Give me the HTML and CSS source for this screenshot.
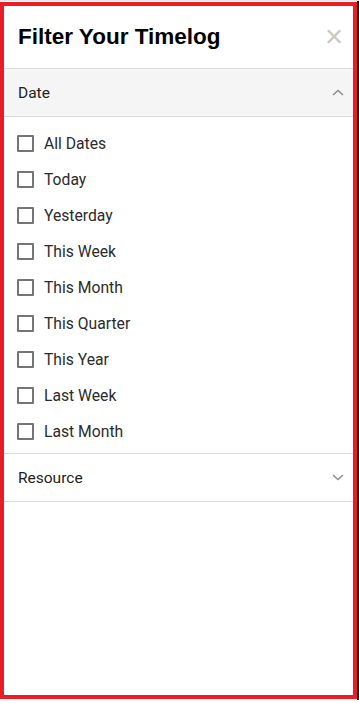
FILE: index.html
```html
<!DOCTYPE html>
<html lang="en">
<head>
  <meta charset="UTF-8" />
  <meta name="viewport" content="width=device-width, initial-scale=1.0"/>
  <title>Filter Your Timelog</title>
  <link rel="stylesheet" href="styles.css">
</head>
<body>
  <div class="frame">
    <div class="panel-header">
      <h2>Filter Your Timelog</h2>
      <span class="close">&times;</span>
    </div>

    <!-- Date -->
    <div class="section-head open">
      <span>Date</span>
      <svg class="chevron" width="12" height="7" viewBox="0 0 12 7"><path d="M1 6 L6 1.5 L11 6" fill="none" stroke="#8a8a8a" stroke-width="1.4"/></svg>
    </div>
    <div class="options">
      <label class="option"><input type="checkbox"><span>All Dates</span></label>
      <label class="option"><input type="checkbox"><span>Today</span></label>
      <label class="option"><input type="checkbox"><span>Yesterday</span></label>
      <label class="option"><input type="checkbox"><span>This Week</span></label>
      <label class="option"><input type="checkbox"><span>This Month</span></label>
      <label class="option"><input type="checkbox"><span>This Quarter</span></label>
      <label class="option"><input type="checkbox"><span>This Year</span></label>
      <label class="option"><input type="checkbox"><span>Last Week</span></label>
      <label class="option"><input type="checkbox"><span>Last Month</span></label>
    </div>

    <!-- Resource -->
    <div class="section-head">
      <span>Resource</span>
      <svg class="chevron" width="12" height="7" viewBox="0 0 12 7"><path d="M1 1 L6 5.5 L11 1" fill="none" stroke="#8a8a8a" stroke-width="1.4"/></svg>
    </div>
  </div>
</body>
</html>
```

FILE: styles.css
```css
html, body {
  margin: 0;
  padding: 0;
  background: #fff;
}
body {
  font-family: Roboto, "Liberation Sans", Arial, sans-serif;
  width: 359px;
  height: 703px;
  padding-top: 2px;
  box-sizing: border-box;
  border-top: 1px solid #e6e6e6;
  position: relative;
}
body::after {
  content: "";
  position: absolute;
  top: 0;
  right: 0;
  width: 2px;
  height: 699px;
  background: #111;
}
.frame {
  width: 357px;
  height: 697px;
  margin-top: -1px;
  border: 4px solid #ed1c24;
  box-sizing: border-box;
}
.panel-header {
  height: 62px;
  display: flex;
  align-items: center;
  justify-content: space-between;
  padding: 0 10px 0 14px;
  border-bottom: 1px solid #dcdcdc;
}
.panel-header h2 {
  margin: 0;
  font-family: "Liberation Sans", Arial, sans-serif;
  font-size: 22.5px;
  font-weight: bold;
  color: #000;
}
.close {
  font-family: "Liberation Sans", Arial, sans-serif;
  font-size: 31px;
  line-height: 1;
  color: #c8c8c8;
  margin-top: -2px;
}
.section-head {
  height: 47px;
  display: flex;
  align-items: center;
  justify-content: space-between;
  padding: 0 9px 0 14px;
  font-size: 15.5px;
  color: #222;
  border-bottom: 1px solid #dcdcdc;
}
.section-head.open {
  background: #f5f5f5;
}
.options {
  padding: 8px 0 4px;
  border-bottom: 1px solid #dcdcdc;
}
.option {
  display: flex;
  align-items: center;
  height: 36px;
  padding-left: 13px;
  font-size: 15.7px;
  color: #2b2b2b;
}
.option input {
  appearance: none;
  -webkit-appearance: none;
  width: 17px;
  height: 17px;
  margin: 0 10px 0 0;
  border: 2px solid #757575;
  border-radius: 1px;
  background: #fff;
}
```
